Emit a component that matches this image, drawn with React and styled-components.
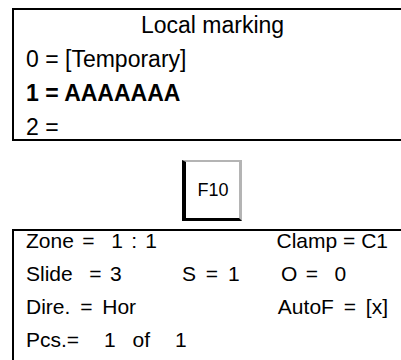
import styled, { createGlobalStyle } from 'styled-components'

const GlobalStyle = createGlobalStyle`
  html, body {
    margin: 0;
    padding: 0;
    overflow: hidden;
    background: #fff;
  }
  body {
    font-family: "Liberation Sans", Arial, sans-serif;
    color: #000;
  }
`

const markings = [
  { id: 0, text: '0 = [Temporary]' },
  { id: 1, text: '1 = AAAAAAA', active: true },
  { id: 2, text: '2 =' },
]

const Screen = () => {
  return (
    <Page>
      <GlobalStyle />
      <MarkingPanel>
        <Title>Local marking</Title>
        {markings.map((m) => (
          <MarkLine key={m.id} $bold={m.active}>
            {m.text}
          </MarkLine>
        ))}
      </MarkingPanel>

      <KeyRow>
        <FunctionKey>F10</FunctionKey>
      </KeyRow>

      <StatusPanel>
        <StatusRow>
          <Cell>Zone =  1 : 1</Cell>
          <Cell $span='2 / 4' $end $tight>Clamp = C1</Cell>
        </StatusRow>
        <StatusRow>
          <Cell>Slide  = 3</Cell>
          <Cell $wide>S = 1</Cell>
          <Cell>O =  0</Cell>
        </StatusRow>
        <StatusRow>
          <Cell $wide>Dire. = Hor</Cell>
          <Cell $span='2 / 4' $end $wide>AutoF = [x]</Cell>
        </StatusRow>
        <StatusRow>
          <Cell>Pcs.=   1  of   1</Cell>
        </StatusRow>
      </StatusPanel>
    </Page>
  )
}

const Page = styled.div`
  padding: 8px 0 0 12px;
`

// panels are cut off by the right edge of the window: no right border
const MarkingPanel = styled.section`
  box-sizing: border-box;
  width: 389px;
  height: 133px;
  border: 2px solid #000;
  border-right: none;
  padding: 0 2px 0 12px;
  font-size: 23px;
`

const Title = styled.div`
  height: 34px;
  line-height: 30px;
  text-align: center;
`

const MarkLine = styled.div`
  height: 34px;
  line-height: 30px;
  font-weight: ${({ $bold }) => ($bold ? 700 : 400)};
`

const KeyRow = styled.div`
  width: 401px;
  display: flex;
  justify-content: center;
  margin-top: 19px;
`

const FunctionKey = styled.div`
  box-sizing: border-box;
  width: 60px;
  height: 61px;
  margin-left: -2px;
  display: flex;
  align-items: center;
  justify-content: center;
  padding-left: 2px;
  font-size: 18px;
  background: #fff;
  border-style: solid;
  border-width: 2px 3px 3px 4px;
  border-color: #b4b4b4 #b4b4b4 #000 #000;
`

const StatusPanel = styled.section`
  box-sizing: border-box;
  width: 389px;
  height: 131px;
  margin-top: 8px;
  border: 2px solid #000;
  border-right: none;
  border-bottom: none;
  padding: 0 12px;
  font-size: 21px;
  word-spacing: 2.5px;
`

const StatusRow = styled.div`
  display: grid;
  grid-template-columns: 156px 99px 1fr;
  width: 362px;
  height: 33px;
  line-height: 18px;
  padding-top: 1px;
  box-sizing: border-box;
`

const Cell = styled.span`
  white-space: pre;
  grid-column: ${({ $span }) => $span || 'auto'};
  justify-self: ${({ $end }) => ($end ? 'end' : 'start')};
  word-spacing: ${({ $tight, $wide }) => ($tight ? '0' : $wide ? '4px' : 'inherit')};
`

export default Screen
